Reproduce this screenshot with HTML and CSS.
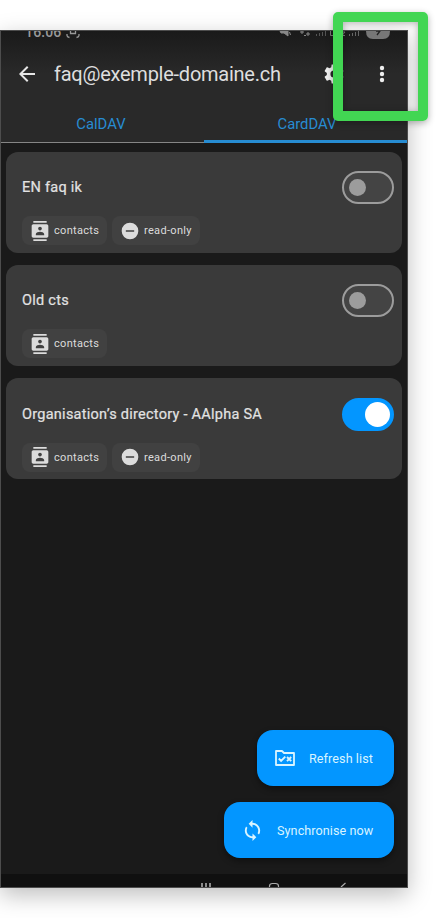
FILE: index.html
```html
<!DOCTYPE html>
<html lang="en">
<head>
<meta charset="utf-8">
<title>Account collections</title>
<link rel="stylesheet" href="styles.css">
</head>
<body>
<svg class="defs" width="0" height="0">
  <symbol id="contacts" viewBox="0 0 24 24"><path fill="currentColor" d="M20 0H4v2h16V0zM4 24h16v-2H4v2zM20 4H4c-1.100 0-2 .9-2 2v12c0 1.100.9 2 2 2h16c1.100 0 2-.9 2-2V6c0-1.100-.9-2-2-2zm-8 2.750c1.240 0 2.250 1.010 2.250 2.250s-1.010 2.250-2.250 2.250S9.750 10.240 9.750 9 10.760 6.750 12 6.750zM17 17H7v-1.500c0-1.670 3.330-2.500 5-2.500s5 .83 5 2.500V17z"/></symbol>
  <symbol id="readonly" viewBox="0 0 24 24"><path fill="currentColor" d="M12 2a10 10 0 1 0 0 20 10 10 0 0 0 0-20zm5 11H7v-2h10v2z"/></symbol>
</svg>
<main class="phone">
  <header class="header">
    <div class="status">
      <span class="time">16:06</span>
      <svg class="capture" width="14" height="9" viewBox="0 0 14 9" fill="none" stroke="#999" stroke-width="1.300"><path d="M1 3v1.500Q1 6 3.500 6.500M13 3v1.500Q13 6 10.500 6.500M4.500 0v2.500h5V0"/></svg>
      <svg class="signals" width="112" height="9" viewBox="0 0 112 9">
        <path d="M1 0h8v5L5 2H2zM10.500 1l1 3" fill="#888" stroke="#888"/>
        <path d="M21 1h4M23 0v3M27 3h4M29 1v4M25 4.500h2" stroke="#888" fill="none"/>
        <path d="M37.500 3v2M40.500 2v3M43.500 1v4M46.500 0v5" stroke="#555" fill="none"/>
        <path d="M51.500 0v4.500h4M58.500 0v4.500h3M63 1h3l-3 3.500h3" stroke="#777" fill="none"/>
        <path d="M70.500 3v2M73.500 2v3M76.500 1v4M79.500 0v5" stroke="#666" fill="none"/>
        <path d="M87 0h24q0 8-7 8H94q-7 0-7-8z" fill="#777"/><path d="M97 0h4l-3 4" fill="none" stroke="#222" stroke-width="1.300"/>
      </svg>
    </div>
    <div class="toolbar">
      <svg class="back" width="24" height="24" viewBox="0 0 24 24"><path fill="#e6e6e6" d="M20 11H7.830l5.590-5.590L12 4l-8 8 8 8 1.410-1.410L7.830 13H20z"/></svg>
      <h1 class="account">faq@exemple-domaine.ch</h1>
      <svg class="gear" width="24" height="24" viewBox="0 0 24 24"><path fill="#eee" d="M19.140 12.940c.04-.3.060-.61.060-.94s-.02-.64-.07-.94l2.030-1.580c.18-.14.230-.41.120-.61l-1.920-3.320c-.12-.22-.37-.29-.59-.22l-2.390.96c-.5-.38-1.030-.7-1.620-.94l-.36-2.540c-.04-.24-.24-.41-.48-.41h-3.840c-.24 0-.43.170-.47.410l-.36 2.540c-.59.240-1.130.57-1.620.94l-2.390-.96c-.22-.08-.47 0-.59.220L2.740 8.870c-.12.210-.08.470.12.610l2.030 1.580c-.05.300-.09.630-.09.940s.02.640.07.940l-2.030 1.580c-.18.140-.23.410-.12.610l1.920 3.320c.12.220.37.290.59.220l2.390-.96c.5.380 1.030.7 1.620.94l.36 2.540c.05.240.24.410.48.410h3.840c.24 0 .44-.17.470-.41l.36-2.540c.59-.24 1.130-.56 1.620-.94l2.390.96c.22.080.47 0 .59-.22l1.920-3.320c.12-.22.070-.47-.12-.61l-2.010-1.580zM12 15.600A3.600 3.600 0 1 1 12 8.400a3.600 3.600 0 0 1 0 7.200z"/></svg>
      <svg class="more" width="6" height="18" viewBox="0 0 6 18" fill="#eee"><circle cx="3" cy="3" r="2.200"/><circle cx="3" cy="9" r="2.200"/><circle cx="3" cy="15" r="2.200"/></svg>
    </div>
    <nav class="tabs">
      <span class="tab">CalDAV</span>
      <span class="tab active">CardDAV</span>
    </nav>
  </header>
  <section class="list">
    <article class="card">
      <div class="row"><h2 class="name">EN faq ik</h2><span class="switch"><span class="thumb"></span></span></div>
      <div class="chips">
        <span class="chip"><svg width="20" height="20"><use href="#contacts"/></svg>contacts</span>
        <span class="chip wide"><svg width="20" height="20"><use href="#readonly"/></svg>read-only</span>
      </div>
    </article>
    <article class="card">
      <div class="row"><h2 class="name">Old cts</h2><span class="switch"><span class="thumb"></span></span></div>
      <div class="chips">
        <span class="chip"><svg width="20" height="20"><use href="#contacts"/></svg>contacts</span>
      </div>
    </article>
    <article class="card">
      <div class="row"><h2 class="name">Organisation’s directory - AAlpha SA</h2><span class="switch on"><span class="thumb"></span></span></div>
      <div class="chips">
        <span class="chip"><svg width="20" height="20"><use href="#contacts"/></svg>contacts</span>
        <span class="chip wide"><svg width="20" height="20"><use href="#readonly"/></svg>read-only</span>
      </div>
    </article>
  </section>
  <div class="actions">
    <button class="fab refresh">
      <svg width="24" height="24" viewBox="0 0 24 24" fill="none" stroke="currentColor"><path stroke-width="1.800" stroke-linejoin="round" d="M3 5h6l2 2h10v12H3z"/><path stroke-width="1.900" d="M5.800 12.500l2.300 2.300 4.200-4.200M14 11l4.200 4.200M18.200 11L14 15.200"/></svg>
      <span>Refresh list</span>
    </button>
    <button class="fab sync">
      <svg width="23" height="23" viewBox="0 0 24 24"><path fill="currentColor" d="M12 4V1L8 5l4 4V6c3.310 0 6 2.690 6 6 0 1.010-.25 1.970-.7 2.800l1.460 1.460A7.930 7.930 0 0 0 20 12c0-4.420-3.580-8-8-8zm0 14c-3.310 0-6-2.690-6-6 0-1.010.25-1.970.7-2.800L5.240 7.740A7.930 7.930 0 0 0 4 12c0 4.420 3.580 8 8 8v3l4-4-4-4v3z"/></svg>
      <span>Synchronise now</span>
    </button>
  </div>
  <footer class="navbar">
    <svg width="406" height="5" viewBox="0 0 406 5" fill="none" stroke="#aaa">
      <path stroke-width="1.800" stroke="#999" d="M201 1v4M205 1v4M209 1v4"/>
      <path stroke-width="1.200" d="M268.500 5V4q0-2.500 3-2.500h3q3 0 3 2.500v1M340 5l4.500-4"/>
    </svg>
  </footer>
</main>
<div class="highlight"></div>
</body>
</html>
```

FILE: styles.css
```css
* { box-sizing: border-box; }
body {
  margin: 0;
  padding-top: 30px;
  height: 918px;
  position: relative;
  overflow: hidden;
  background: #fff;
  font-family: Roboto, sans-serif;
}
.defs { position: absolute; }
h1, h2 { margin: 0; font-weight: 400; }
svg { display: block; flex: none; }
.phone {
  width: 408px;
  height: 858px;
  display: flex;
  flex-direction: column;
  background: #1a1a1a;
  border: 1px solid #4d4d4d;
  box-shadow: 0 7px 22px rgba(0, 0, 0, .26);
  overflow: hidden;
}
.header {
  height: 112px;
  flex: none;
  background: linear-gradient(#1a1a1a, #292929 38%);
}
.status {
  height: 9px;
  display: flex;
  align-items: flex-end;
  padding-left: 24px;
  overflow: hidden;
}
.time {
  width: 36px;
  font-size: 14px;
  font-weight: 500;
  line-height: 16px;
  letter-spacing: .2px;
  color: #999;
}
.capture { margin-left: 5px; }
.signals { margin-left: 199px; }
.toolbar {
  height: 67px;
  display: flex;
  align-items: center;
  padding-left: 13.500px;
}
.account {
  width: 260px;
  margin-left: 15.500px;
  font-size: 20px;
  line-height: 28px;
  letter-spacing: -.25px;
  white-space: nowrap;
  color: #dedede;
}
.gear { margin-left: 8px; }
.more { margin-left: 33px; }
.tabs { display: flex; height: 36px; }
.tab {
  width: 203px;
  padding: 1px 3px 0 0;
  border-bottom: 1px solid #858585;
  color: #278cd2;
  font-size: 14.800px;
  line-height: 33px;
  text-align: center;
}
.tab.active { padding: 1px 0 0 3px; border-bottom: 3px solid #278cd2; }
.list {
  display: flex;
  flex-direction: column;
  gap: 12px;
  padding: 8.500px 5px;
  flex: 1;
}
.card {
  height: 101.300px;
  padding: 19.500px 8px 0 16px;
  border-radius: 12px;
  background: #3a3a3a;
}
.row { display: flex; align-items: center; justify-content: space-between; height: 33px; }
.name {
  font-size: 14.500px;
  letter-spacing: .26px;
  color: #e2e2e2;
  -webkit-text-stroke: .2px #e2e2e2;
}
.switch {
  width: 52px;
  height: 33px;
  padding: 6px 5px;
  border: 2px solid #9c9c9c;
  border-radius: 17px;
  background: #444;
}
.thumb { display: block; width: 17px; height: 17px; border-radius: 50%; background: #9c9c9c; }
.switch.on { display: flex; justify-content: flex-end; padding: 2px; border-color: #0396ff; background: #0396ff; }
.switch.on .thumb { width: 25px; height: 25px; background: #fff; }
.chips { display: flex; gap: 5px; margin-top: 12px; }
.chip {
  display: flex;
  align-items: center;
  gap: 4px;
  width: 85px;
  height: 29px;
  padding-left: 8px;
  border-radius: 8px;
  background: #414141;
  color: #dcdcdc;
  font-size: 11px;
  letter-spacing: .32px;
  white-space: nowrap;
}
.chip.wide { width: 88px; }
.actions {
  display: flex;
  flex-direction: column;
  align-items: flex-end;
  gap: 16px;
  padding: 0 13px 16px 0;
}
.fab {
  display: flex;
  align-items: center;
  height: 56px;
  padding: 0;
  border: 0;
  border-radius: 16px;
  background: #0396ff;
  color: #d9f4ff;
  font: 400 12.600px Roboto, sans-serif;
  letter-spacing: .08px;
  white-space: nowrap;
  box-shadow: 0 3px 6px rgba(0, 0, 0, .4);
}
.refresh { width: 137px; padding-left: 16px; gap: 12px; }
.sync { width: 170px; padding-left: 17px; gap: 13px; }
.navbar { height: 13px; flex: none; padding-top: 8px; background: #101010; }
.highlight {
  position: absolute;
  left: 333px;
  top: 12px;
  width: 95px;
  height: 109px;
  border: 10px solid #42d653;
  border-radius: 5px;
  box-shadow: 0 2px 7px rgba(0, 0, 0, .3), inset 0 1px 7px rgba(0, 0, 0, .3);
}
```
